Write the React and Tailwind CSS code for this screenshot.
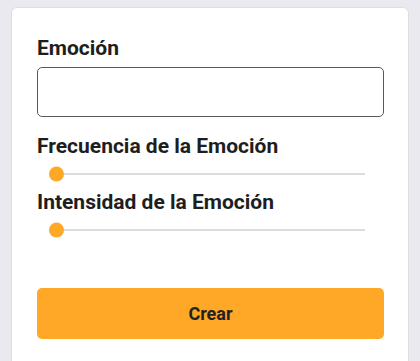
import React from 'react';

// Slider visual: pista gris con el control al inicio
const Slider = () => (
    <div className="h-8 flex items-center pl-[19px] pr-[19px]">
        <div className="relative flex-1 h-[2px] bg-[#dcdcdc]">
            <div className="absolute left-[-7px] top-1/2 -translate-y-1/2 w-[15px] h-[15px] rounded-full bg-[#ffa726]"></div>
        </div>
    </div>
);

const App = () => {
    return (
        <div className="min-h-[361px] bg-[#e9e9ef] pt-[7px] px-[11px] overflow-hidden" style={{ fontFamily: 'Roboto, "Liberation Sans", sans-serif' }}>
            <div className="bg-white border border-[#dedee2] rounded-t-md pl-[25px] pr-[24px] pt-[28px] pb-8 min-h-[354px]">
                <label className="block text-[21px] leading-6 font-bold text-[#1e1e1e]">Emoción</label>
                <input className="block w-full h-[50px] mt-[7px] border border-[#5a5a5a] rounded-[5px] px-3 outline-none" />
                <label className="block mt-[17px] text-[21px] leading-6 font-bold text-[#1e1e1e]">Frecuencia de la Emoción</label>
                <Slider />
                <label className="block text-[21px] leading-6 font-bold text-[#1e1e1e]">Intensidad de la Emoción</label>
                <Slider />
                <button className="mt-[42px] w-full h-[51px] bg-[#ffa726] rounded-[5px] text-[18px] font-bold text-[#222]">
                    Crear
                </button>
            </div>
        </div>
    );
};

export default App;
